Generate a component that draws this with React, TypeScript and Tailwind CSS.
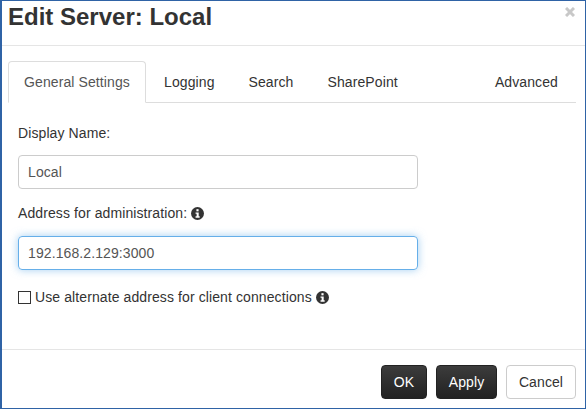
import React from "react";

function InfoIcon() {
  return (
    <svg viewBox="0 0 12 12" className="w-[13px] h-[13px] shrink-0">
      <circle cx="6" cy="6" r="6" fill="#333333" />
      <rect x="5" y="2" width="2" height="2" fill="#ffffff" />
      <path d="M4.2 5h2.9v3.6H8V10H4.2V8.6h1V6.3h-1z" fill="#ffffff" />
    </svg>
  );
}

export default function App() {
  return (
    <div className="w-[586px] h-[409px] bg-white border border-[#2f63a6] border-l-2 flex flex-col overflow-hidden font-['Liberation_Sans',Arial,sans-serif] text-[14px] tracking-[0.1px] text-[#333333]">
      <div className="h-[45px] shrink-0 border-b border-[#e5e5e5] flex justify-between pl-[6px] pr-[9px]">
        <div className="text-[24px] font-bold leading-[31px] tracking-normal">Edit Server: Local</div>
        <svg viewBox="0 0 10 10" className="w-[10px] h-[10px] mt-[6px] mr-[1px] shrink-0">
          <path d="M1 1L9 9M9 1L1 9" stroke="#c8c8c8" strokeWidth="3" />
        </svg>
      </div>
      <div className="flex-1 flex flex-col pl-[6px] pr-[9px] pt-[15px]">
        <div className="h-[42px] shrink-0 flex border-b border-[#dddddd]">
          <div className="h-[42px] w-[138px] pt-[1px] flex items-center justify-center bg-white border border-[#dddddd] border-b-white rounded-t-[4px] text-[#555555]">General Settings</div>
          <div className="h-[41px] pt-[1px] ml-[18px] flex items-center">Logging</div>
          <div className="h-[41px] pt-[1px] ml-[34px] flex items-center">Search</div>
          <div className="h-[41px] pt-[1px] ml-[34px] flex items-center">SharePoint</div>
          <div className="h-[41px] pt-[1px] ml-auto mr-[18px] flex items-center">Advanced</div>
        </div>
        <div className="pl-[10px] pt-[20px] flex flex-col">
          <div className="h-[20px] leading-[20px]">Display Name:</div>
          <div className="mt-[12px] w-[400px] h-[34px] border border-[#cccccc] rounded-[4px] px-[9px] flex items-center text-[#555555]">Local</div>
          <div className="mt-[14px] h-[20px] flex items-center gap-[4px]">
            <span>Address for administration:</span>
            <InfoIcon />
          </div>
          <div className="mt-[13px] w-[400px] h-[34px] border border-[#66afe9] rounded-[4px] px-[9px] flex items-center text-[#555555] shadow-[0_0_8px_rgba(102,175,233,0.6)]">192.168.2.129:3000</div>
          <div className="mt-[17px] h-[20px] flex items-center">
            <span className="w-[13px] h-[13px] border border-[#333333] shrink-0" />
            <span className="ml-[4px]">Use alternate address for client connections</span>
            <span className="ml-[4px]"><InfoIcon /></span>
          </div>
        </div>
      </div>
      <div className="h-[59px] shrink-0 border-t border-[#e5e5e5] flex items-start justify-end pt-[15px] pr-[9px]">
        <div className="w-[46px] h-[34px] rounded-[4px] border border-[#222222] bg-gradient-to-b from-[#3c3c3c] to-[#222222] text-white flex items-center justify-center">OK</div>
        <div className="ml-[9px] w-[61px] h-[34px] rounded-[4px] border border-[#222222] bg-gradient-to-b from-[#3c3c3c] to-[#222222] text-white flex items-center justify-center">Apply</div>
        <div className="ml-[9px] w-[70px] h-[34px] rounded-[4px] border border-[#cccccc] bg-white flex items-center justify-center">Cancel</div>
      </div>
    </div>
  );
}
